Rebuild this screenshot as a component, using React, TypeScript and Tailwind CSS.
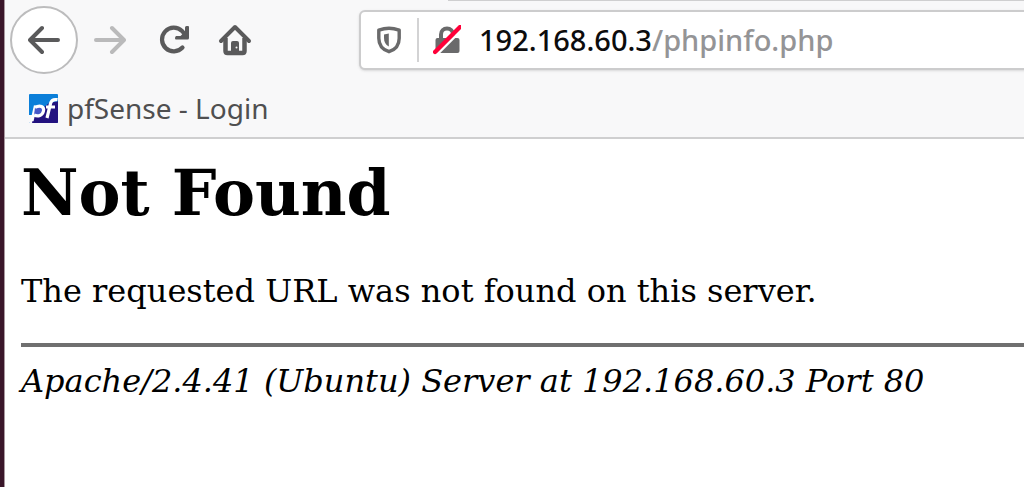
import { useState } from 'react'

function BackIcon() {
  return (
    <svg viewBox="0 0 32 32" className="size-8" fill="none" stroke="currentColor" strokeWidth="4" strokeLinecap="round" strokeLinejoin="round" aria-hidden="true">
      <path d="M30 16H3M14 4L2 16l12 12" />
    </svg>
  )
}

function ForwardIcon() {
  return (
    <svg viewBox="0 0 32 32" className="size-8" fill="none" stroke="currentColor" strokeWidth="4" strokeLinecap="round" strokeLinejoin="round" aria-hidden="true">
      <path d="M2 16h27M18 4l12 12-12 12" />
    </svg>
  )
}

function ReloadIcon() {
  return (
    <svg viewBox="0 0 32 32" className="size-8" aria-hidden="true">
      <path d="M24.500 23.500A11.800 11.800 0 1 1 24 7l3 3.500" fill="none" stroke="currentColor" strokeWidth="4.200" strokeLinecap="round" />
      <path d="M28.500 2H30q1 0 1 1v11q0 1.500-1.500 1.500H18q-1 0-1-1.200T18 12h4.500l4.500-4.500V3.500Q27 2 28.500 2z" fill="currentColor" />
    </svg>
  )
}

function HomeIcon() {
  return (
    <svg viewBox="0 0 34 34" className="size-[34px]" aria-hidden="true">
      <path d="M3 18L17 4l14 14" fill="none" stroke="currentColor" strokeWidth="4" strokeLinecap="round" strokeLinejoin="round" />
      <path d="M7.500 15v13q0 2 2 2h15q2 0 2-2V15" fill="none" stroke="currentColor" strokeWidth="4.500" />
      <path d="M13 30V20q0-2 2-2h4q2 0 2 2v10z" fill="currentColor" />
      <circle cx="18.500" cy="24.500" r="1" fill="#f9f9fa" />
    </svg>
  )
}

function ShieldIcon() {
  return (
    <svg viewBox="0 0 26 28" className="h-7 w-[26px]" aria-hidden="true">
      <path d="M13 2.200c3.500 0 7 .8 10.200 2v8c0 6.500-4 11.500-10.200 13.500C6.800 23.700 2.800 18.700 2.800 12.200v-8c3.200-1.200 6.700-2 10.200-2z" fill="none" stroke="currentColor" strokeWidth="3.400" strokeLinejoin="round" />
      <path d="M12.800 7.500v13C9.500 18.500 8 16 8 12V8.500z" fill="currentColor" />
    </svg>
  )
}

function InsecureIcon() {
  return (
    <svg viewBox="0 0 28 30" className="h-[30px] w-7" aria-hidden="true">
      <path d="M8 14V9.500a6 6 0 0 1 12 0V14" fill="none" stroke="currentColor" strokeWidth="4" />
      <rect x="2.500" y="13" width="24" height="15" rx="2" fill="currentColor" />
      <path d="M3 30.500L29 4.500" stroke="#fff" strokeWidth="2.500" />
      <path d="M2 27L27 2" stroke="#ff0039" strokeWidth="4.200" strokeLinecap="round" />
    </svg>
  )
}

function PfSenseIcon() {
  return (
    <svg viewBox="0 0 30 30" className="size-[30px]" aria-hidden="true">
      <defs>
        <clipPath id="pf-tile">
          <rect x="0" y="1" width="29" height="29" rx="1" />
        </clipPath>
      </defs>
      <g clipPath="url(#pf-tile)">
        <path d="M0 0h30v30H0z" fill="#0b7fd9" />
        <path d="M30 8L20 10 2 25v5h28z" fill="#23127f" />
        <path d="M0 22h5l-2 8H0z" fill="#f9f9fa" />
      </g>
      <g fill="none" stroke="#fff" strokeWidth="3.200">
        <path d="M6.500 12.500L3 28" />
        <path d="M6 14.500c5-3 9.500-1 8.500 3.500s-5.500 6-9.500 4" fill="#4858c8" />
        <path d="M18 25l3.500-14.500c.8-3.500 3-4.500 7-3.800M17 14h9" />
      </g>
    </svg>
  )
}

function AddressBar() {
  const [url, setUrl] = useState('192.168.60.3/phpinfo.php')
  const slash = url.indexOf('/')
  const host = slash < 0 ? url : url.slice(0, slash)
  const path = slash < 0 ? '' : url.slice(slash)

  return (
    <div className="-mr-2 flex h-[60px] min-w-0 flex-1 items-center rounded-md border-2 border-[#cccccd] bg-white pl-3 text-[#6a6a6b] shadow-sm">
      <button type="button" aria-label="Tracking protection" className="flex size-8 shrink-0 items-center justify-center">
        <ShieldIcon />
      </button>
      <span className="ml-3 h-11 w-[2px] shrink-0 bg-[#d3d3d4]" />
      <button type="button" aria-label="Connection is not secure" className="ml-3 flex size-8 shrink-0 items-center justify-center">
        <InsecureIcon />
      </button>
      {/* the input sits over a coloured copy, so the host stands out from the path */}
      <div className="relative ml-4 h-10 min-w-0 flex-1 text-[29px] font-medium leading-10">
        <div aria-hidden="true" className="overflow-hidden whitespace-pre text-[#949496]">
          <span className="text-[#0c0c0d]">{host}</span>{path}
        </div>
        <input
          type="text"
          aria-label="Address"
          spellCheck={false}
          value={url}
          onChange={(e) => setUrl(e.target.value)}
          className="absolute inset-0 w-full bg-transparent text-transparent caret-black outline-none"
        />
      </div>
    </div>
  )
}

export default function App() {
  return (
    <div className="min-h-screen border-l-4 border-[#3a162a] bg-white font-['Noto_Sans',sans-serif]">
      <div className="min-h-screen border-l border-[#a8989f]">
        <header className="border-b-2 border-[#cfcfd0] bg-[#f8f8f9]">
          <div className="flex justify-end">
            <div className="h-px w-[576px] bg-[#cfcfd0]" />
          </div>
          <nav aria-label="Browser" className="flex h-[78px] items-center pl-[5px] text-[#5a5a5b]">
            <button type="button" aria-label="Back" className="flex size-[68px] shrink-0 items-center justify-center rounded-full border-2 border-[#bcbcbd] bg-white">
              <BackIcon />
            </button>
            <button type="button" aria-label="Forward" disabled className="ml-4 shrink-0 text-[#bababb]">
              <ForwardIcon />
            </button>
            <button type="button" aria-label="Reload" className="ml-8 shrink-0">
              <ReloadIcon />
            </button>
            <button type="button" aria-label="Home" className="ml-7 mr-[107px] shrink-0">
              <HomeIcon />
            </button>
            <AddressBar />
          </nav>
          <div className="flex h-[58px] items-center pl-6">
            <a href="#login" className="flex items-center gap-2 text-[28px] leading-9 text-[#4f4f50]">
              <PfSenseIcon />
              pfSense - Login
            </a>
          </div>
        </header>

        <main className="pl-4 pt-4 font-['DejaVu_Serif',serif] text-black">
          <h1 className="text-[63px] font-bold leading-[76px]">Not Found</h1>
          <p className="mt-10 text-[32px] leading-10">The requested URL was not found on this server.</p>
          <hr className="mt-8 border-t-4 border-[#6f6f6f]" />
          <address className="mt-[14px] text-[32px] italic leading-10">Apache/2.4.41 (Ubuntu) Server at 192.168.60.3 Port 80</address>
        </main>
      </div>
    </div>
  )
}
